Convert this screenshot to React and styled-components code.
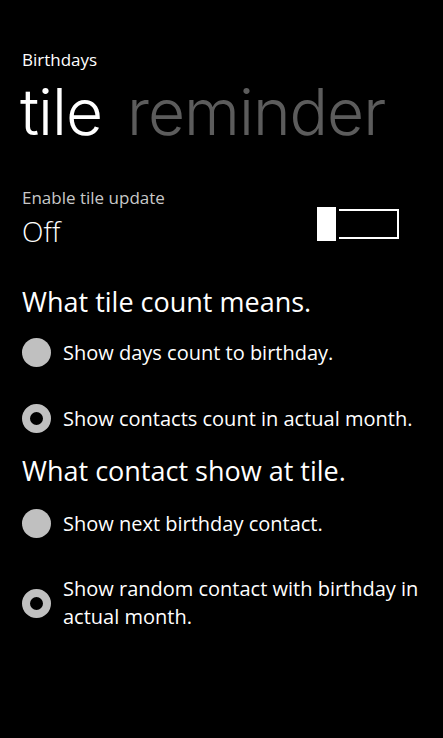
import React from "react";
import styled, { createGlobalStyle } from "styled-components";

const Global = createGlobalStyle`
  html, body { margin: 0; padding: 0; background: #000; }
  body { font-family: "Open Sans", "Noto Sans", sans-serif; color: #fff; }
`;

const Page = styled.div`
  width: 443px;
  height: 738px;
  background: #000;
  box-sizing: border-box;
  padding: 50px 0 0 22px;
  display: flex;
  flex-direction: column;
`;

const AppTitle = styled.div`
  font-size: 17px;
  line-height: 20px;
  color: #fff;
`;

const PivotHeaders = styled.div`
  display: flex;
  gap: 25px;
  margin-left: -2px;
  margin-top: 4px;
`;

const PivotHeader = styled.div`
  font-family: "Inter", "Open Sans", sans-serif;
  font-size: 64px;
  font-weight: 300;
  line-height: 76px;
  letter-spacing: -1px;
  color: ${(p) => (p.$active ? "#fff" : "#5c5c5c")};
`;

const ToggleRow = styled.div`
  display: flex;
  align-items: flex-end;
  justify-content: space-between;
  padding-right: 44px;
  margin-top: 38px;
`;

const ToggleLabels = styled.div`
  display: flex;
  flex-direction: column;
`;

const ToggleCaption = styled.div`
  font-size: 17px;
  line-height: 20px;
  color: #c8c8c8;
`;

const ToggleState = styled.div`
  font-size: 28px;
  font-weight: 300;
  line-height: 32px;
  margin-top: 7px;
`;

const Switch = styled.div`
  display: flex;
  align-items: center;
  gap: 3px;
  margin-bottom: 6px;
`;

const Thumb = styled.div`
  width: 19px;
  height: 34px;
  background: #fff;
`;

const Track = styled.div`
  width: 58px;
  height: 26px;
  border: 2px solid #fff;
  border-left: none;
`;

const SectionTitle = styled.div`
  font-size: 27px;
  line-height: 34px;
  margin-top: ${(p) => p.$mt}px;
`;

const RadioRow = styled.div`
  display: flex;
  align-items: center;
  gap: 12px;
  margin-top: ${(p) => p.$mt}px;
`;

const RadioDot = styled.div`
  flex: none;
  width: 29px;
  height: 29px;
  border-radius: 50%;
  box-sizing: border-box;
  background: ${(p) => (p.$checked ? "#000" : "#c0c0c0")};
  border: ${(p) => (p.$checked ? "8px solid #c0c0c0" : "none")};
`;

const RadioText = styled.div`
  font-size: 20px;
  line-height: 28px;
  color: #fff;
  padding-right: 12px;
`;

export default function App() {
  return (
    <Page>
      <Global />
      <AppTitle>Birthdays</AppTitle>
      <PivotHeaders>
        <PivotHeader $active>tile</PivotHeader>
        <PivotHeader>reminder</PivotHeader>
      </PivotHeaders>
      <ToggleRow>
        <ToggleLabels>
          <ToggleCaption>Enable tile update</ToggleCaption>
          <ToggleState>Off</ToggleState>
        </ToggleLabels>
        <Switch>
          <Thumb />
          <Track />
        </Switch>
      </ToggleRow>
      <SectionTitle $mt={38}>What tile count means.</SectionTitle>
      <RadioRow $mt={19}>
        <RadioDot />
        <RadioText>Show days count to birthday.</RadioText>
      </RadioRow>
      <RadioRow $mt={37}>
        <RadioDot $checked />
        <RadioText>Show contacts count in actual month.</RadioText>
      </RadioRow>
      <SectionTitle $mt={21}>What contact show at tile.</SectionTitle>
      <RadioRow $mt={21}>
        <RadioDot />
        <RadioText>Show next birthday contact.</RadioText>
      </RadioRow>
      <RadioRow $mt={37}>
        <RadioDot $checked />
        <RadioText>Show random contact with birthday in actual month.</RadioText>
      </RadioRow>
    </Page>
  );
}
